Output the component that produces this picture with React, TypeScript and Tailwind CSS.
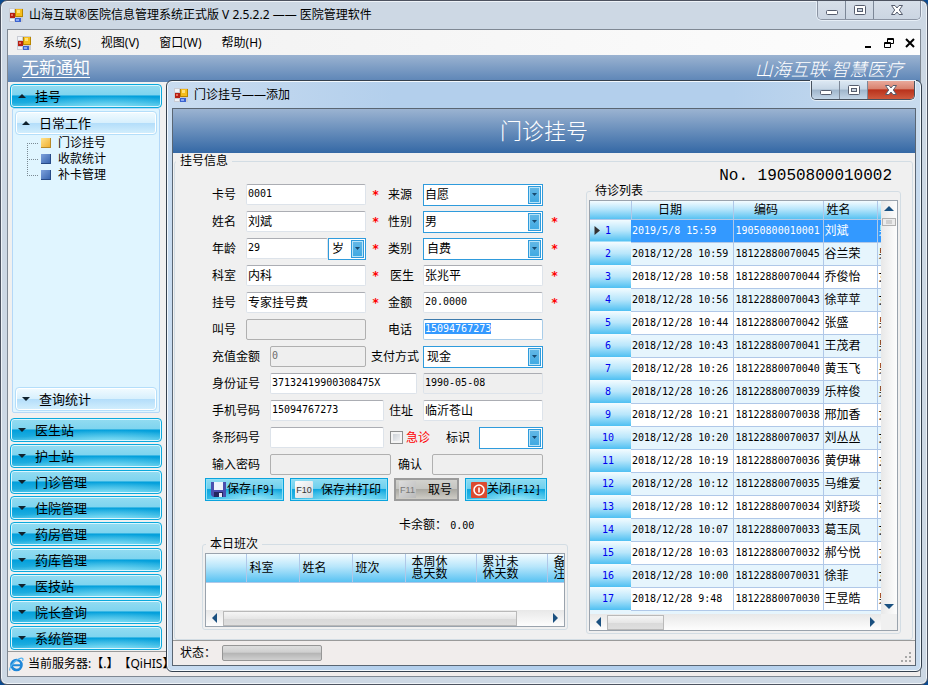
import { useEffect, useRef } from "react";
import type { ReactNode } from "react";

const CJK = "font-['Noto_Sans','Noto_Sans_CJK_SC',sans-serif]";
const MONO = "font-['DejaVu_Sans_Mono','Noto_Sans_CJK_SC',monospace] text-[10px]";

function AppIcon() {
  return (
    <svg width="14" height="14" viewBox="0 0 14 14" className="shrink-0">
      <rect width="14" height="14" fill="#c9ccd4" />
      <rect x="1" y="1" width="4" height="3" fill="#f1f3f7" />
      <rect x="1" y="5" width="5" height="5" fill="#b51f14" />
      <rect x="2" y="6" width="2" height="2" fill="#e8705c" />
      <rect x="6" y="1" width="8" height="8" fill="#b88600" />
      <rect x="7" y="1" width="6" height="7" fill="#f5bd1c" />
      <rect x="8" y="2" width="3" height="3" fill="#ffe27a" />
      <rect x="1" y="11" width="4" height="2" fill="#f1f3f7" />
      <rect x="6" y="10" width="6" height="4" fill="#3b63cf" />
      <rect x="7" y="11" width="3" height="2" fill="#8aa9f4" />
    </svg>
  );
}

function CaptionGlyph({ kind }: { kind: "min" | "max" | "close" }) {
  return (
    <svg width="14" height="12" viewBox="0 0 14 12" fill="#fff" stroke="#565d6e">
      {kind === "min" && <rect x="1.5" y="6.5" width="11" height="4" rx="1" />}
      {kind === "max" && (
        <>
          <rect x="1.5" y="1.5" width="11" height="9" rx="1" />
          <rect x="4.5" y="4.5" width="5" height="3" fill="#c9d3df" />
        </>
      )}
      {kind === "close" && (
        <path d="M1.5 1.5H5L7 4L9 1.5H12.5L9.3 6L12.5 10.5H9L7 8L5 10.5H1.5L4.7 6Z" />
      )}
    </svg>
  );
}

function CaptionButtons({ active = false }: { active?: boolean }) {
  const face = active
    ? "bg-[linear-gradient(#dce8f3_0%,#c5d5e5_45%,#9fb5cb_50%,#c4d6e8_100%)]"
    : "bg-[linear-gradient(#d7dfe9,#cbd5e2)]";
  const closeFace = active
    ? "bg-[linear-gradient(#e9a99b_0%,#d98370_42%,#b9321c_50%,#cf5a3e_100%)]"
    : face;
  return (
    <div
      className={`flex h-[19px] overflow-hidden rounded-b-[5px] border border-t-0 shadow-[0_0_0_1px_#e6eef6] ${
        active ? "border-[#47525f]" : "border-[#8b94a3]"
      }`}
    >
      <button aria-label="最小化" className={`flex w-7 items-center justify-center border-r border-[#7c8797] ${face}`}>
        <CaptionGlyph kind="min" />
      </button>
      <button aria-label="最大化" className={`flex w-7 items-center justify-center border-r border-[#7c8797] ${face}`}>
        <CaptionGlyph kind="max" />
      </button>
      <button aria-label="关闭" className={`flex w-[46px] items-center justify-center ${closeFace}`}>
        <CaptionGlyph kind="close" />
      </button>
    </div>
  );
}

function Chevron({ up = false }: { up?: boolean }) {
  return (
    <svg width="8" height="4" viewBox="0 0 8 4" className="shrink-0" fill="#10222e">
      <path d={up ? "M0 4L4 0L8 4Z" : "M0 0H8L4 4Z"} />
    </svg>
  );
}

function NavButton({ label, up }: { label: string; up?: boolean }) {
  return (
    <button className="flex h-6 w-full shrink-0 items-center gap-[9px] rounded-[4px] border border-[#0aa9dc] bg-[radial-gradient(ellipse_60%_50%_at_65%_100%,#7fdcf4_0%,transparent_100%),linear-gradient(#93dcf1_0%,#7ed4ef_45%,#029fdb_50%,#1cacdf_80%,#4cc4e8_100%)] pl-[7px] text-left text-[13px] leading-[22px] shadow-[inset_0_0_0_1px_#d8f6ff]">
      <Chevron up={up} />
      {label}
    </button>
  );
}

function SubNavButton({ label, up }: { label: string; up?: boolean }) {
  return (
    <button className="flex h-6 w-full shrink-0 items-center gap-[9px] rounded-[4px] border border-[#b4defa] bg-[linear-gradient(#f2fbff_0%,#d8f0fd_48%,#b4defa_52%,#d4effd_100%)] pl-[6px] text-left text-[13px] leading-[22px] shadow-[inset_0_0_0_1px_#fff]">
      <Chevron up={up} />
      {label}
    </button>
  );
}

function TreeItem({ label, active, last }: { label: string; active?: boolean; last?: boolean }) {
  return (
    <li className="flex h-4 items-center">
      <svg width="13" height="16" viewBox="0 0 13 16" className="shrink-0" stroke="#7b8a94" strokeDasharray="1 1">
        {!active && <path d="M.5 0V8" />}
        {!last && <path d="M.5 8V16" />}
        <path d="M0 8.5H12" />
      </svg>
      <span
        className={`ml-px size-[10px] shrink-0 border-r border-b ${
          active
            ? "border-[#b88a28] bg-[linear-gradient(135deg,#ffe28c,#f0b030)]"
            : "border-[#274a86] bg-[linear-gradient(135deg,#7ea2dc,#3a66b0)]"
        }`}
      />
      <a href="#" className="ml-[7px] text-[12px] leading-4">
        {label}
      </a>
    </li>
  );
}

function Label({ id, w, children }: { id: string; w: string; children: ReactNode }) {
  return (
    <label htmlFor={id} className={`shrink-0 text-[12px] leading-4 whitespace-nowrap ${w}`}>
      {children}
    </label>
  );
}

function Star() {
  return (
    <span className="w-[22px] shrink-0 pl-[6px] font-['DejaVu_Sans_Mono',monospace] text-[12px] leading-4 font-bold text-[#ff0000]">
      *
    </span>
  );
}

function Text({
  id,
  value = "",
  w,
  mono,
  state = "normal",
  label,
}: {
  id: string;
  value?: string;
  w: string;
  mono?: boolean;
  state?: "normal" | "disabled" | "readonly";
  label?: string;
}) {
  const look =
    state === "disabled"
      ? "border-[#b0b0b0] bg-[#efefef] text-[#6d6d6d]"
      : state === "readonly"
        ? "border-[#dde3ea] border-t-[#abadb3] bg-[#efefef]"
        : "border-[#dde3ea] border-t-[#abadb3] bg-white";
  return (
    <input
      id={id}
      aria-label={label}
      defaultValue={value}
      disabled={state === "disabled"}
      readOnly={state === "readonly"}
      className={`h-[21px] min-w-0 shrink-0 rounded-[2px] border px-px pb-[2px] ${look} ${w} ${
        mono ? MONO : "text-[12px]"
      }`}
    />
  );
}

function Select({
  id,
  value = "",
  w,
  pad = "pl-px",
  label,
}: {
  id: string;
  value?: string;
  w: string;
  pad?: string;
  label?: string;
}) {
  return (
    <span className={`relative flex h-[22px] shrink-0 ${w}`}>
      <select
        id={id}
        aria-label={label}
        className={`h-full w-full appearance-none border border-[#2f9bdc] bg-white text-[12px] leading-5 text-black ${pad}`}
      >
        <option>{value}</option>
      </select>
      <span className="pointer-events-none absolute top-[2px] right-[2px] bottom-[2px] flex w-[13px] items-center justify-center border border-[#2f9bdc] bg-[linear-gradient(#64b8e6,#3fa9e2)] shadow-[inset_0_0_0_1px_#b9e4f8]">
        <svg width="5" height="3" viewBox="0 0 5 3" fill="#174a70">
          <path d="M0 0H5L2.5 3Z" />
        </svg>
      </span>
    </span>
  );
}

function Arrow({ dir }: { dir: "left" | "right" | "up" | "down" }) {
  const d = {
    left: "M8 0V10L3 5Z",
    right: "M2 0V10L7 5Z",
    up: "M0 7H10L5 2Z",
    down: "M0 3H10L5 8Z",
  }[dir];
  return (
    <svg width="10" height="10" viewBox="0 0 10 10" fill="#1a5080" className="shrink-0">
      <path d={d} />
    </svg>
  );
}

function HScroll({ thumb }: { thumb: string }) {
  return (
    <div className="flex h-4 shrink-0 items-center bg-[linear-gradient(#e8e8e8,#fdfdfd)] px-[3px]">
      <button aria-label="向左滚动" className="mr-1 flex">
        <Arrow dir="left" />
      </button>
      <div className="flex h-[15px] flex-1">
        <div className={`border border-[#b9b9b9] bg-[linear-gradient(#f6f6f6_0%,#e6e6e6_50%,#d9d9d9_52%,#dedede_100%)] ${thumb}`} />
      </div>
      <button aria-label="向右滚动" className="flex">
        <Arrow dir="right" />
      </button>
    </div>
  );
}

const HEAD = "bg-[linear-gradient(#f4fcff_0%,#b8e6fb_45%,#58c2f2_100%)]";

const NAV = ["医生站", "护士站", "门诊管理", "住院管理", "药房管理", "药库管理", "医技站", "院长查询", "系统管理"];

const QUEUE: [string, string, string, string][] = [
  ["2019/5/8 15:59", "19050800010001", "刘斌", "男"],
  ["2018/12/28 10:59", "18122880070045", "谷兰荣", "男"],
  ["2018/12/28 10:58", "18122880070044", "乔俊怡", "女"],
  ["2018/12/28 10:56", "18122880070043", "徐苹苹", "女"],
  ["2018/12/28 10:44", "18122880070042", "张盛", "男"],
  ["2018/12/28 10:43", "18122880070041", "王茂君", "男"],
  ["2018/12/28 10:26", "18122880070040", "黄玉飞", "男"],
  ["2018/12/28 10:26", "18122880070039", "乐梓俊", "男"],
  ["2018/12/28 10:21", "18122880070038", "邢加香", "女"],
  ["2018/12/28 10:20", "18122880070037", "刘丛丛", "女"],
  ["2018/12/28 10:19", "18122880070036", "黄伊琳", "女"],
  ["2018/12/28 10:12", "18122880070035", "马维爱", "女"],
  ["2018/12/28 10:12", "18122880070034", "刘舒琰", "女"],
  ["2018/12/28 10:07", "18122880070033", "葛玉凤", "女"],
  ["2018/12/28 10:03", "18122880070032", "郝兮悦", "女"],
  ["2018/12/28 10:00", "18122880070031", "徐菲", "女"],
  ["2018/12/28 9:48", "18122880070030", "王昱皓", "男"],
];

function QueueTable() {
  return (
    <div className="flex min-h-0 flex-1 border border-[#9aa3ad] bg-[#f0f0f0]">
      <div className="flex min-w-0 flex-1 flex-col">
        <div className="min-h-0 flex-1 overflow-hidden bg-[#e6f5fd]">
          <table className="w-full table-fixed border-collapse text-[12px] leading-4">
            <colgroup>
              <col className="w-[41px]" />
              <col className="w-[102px]" />
              <col className="w-[90px]" />
              <col className="w-[54px]" />
              <col />
            </colgroup>
            <thead>
              <tr className={`h-[18px] ${HEAD}`}>
                <th className="border-r border-b border-[#b0c8e8] p-0" />
                <th className="border-r border-b border-[#b0c8e8] p-0 pr-6 font-normal">日期</th>
                <th className="border-r border-b border-[#b0c8e8] p-0 pr-6 font-normal">编码</th>
                <th className="border-r border-b border-[#b0c8e8] p-0 pl-[3px] text-left font-normal">姓名</th>
                <th className="border-b border-[#b0c8e8] p-0" />
              </tr>
            </thead>
            <tbody>
              {QUEUE.map(([date, code, name, sex], i) => (
                <tr
                  key={code}
                  className={`h-[23px] ${
                    i === 0 ? "bg-[#3399ff] text-white" : i % 2 ? "bg-[#e6f5fd]" : "bg-white"
                  }`}
                >
                  <th className="bg-[linear-gradient(#f4fcff_0%,#b8e6fb_50%,#4fc0f2_100%)] p-0 font-normal text-[#0000ee]">
                    <span className="flex items-center">
                      <span className="flex w-3 pl-1">
                        {i === 0 && (
                          <svg width="7" height="9" viewBox="0 0 7 9" className="shrink-0" fill="#333">
                            <path d="M.5 0V9L6 4.5Z" />
                          </svg>
                        )}
                      </span>
                      <span className={`w-3 text-center ${MONO}`}>{i + 1}</span>
                    </span>
                  </th>
                  <td className={`border-r border-b border-[#b0c8e8] p-0 pl-px whitespace-nowrap ${MONO}`}>{date}</td>
                  <td className={`border-r border-b border-[#b0c8e8] p-0 pl-[2px] whitespace-nowrap ${MONO}`}>{code}</td>
                  <td className="border-r border-b border-[#b0c8e8] p-0 pl-px whitespace-nowrap">{name}</td>
                  <td className="overflow-hidden border-b border-[#b0c8e8] p-0 pl-px whitespace-nowrap">{sex}</td>
                </tr>
              ))}
            </tbody>
          </table>
        </div>
        <HScroll thumb="w-[57px]" />
      </div>
      <div className="mb-4 flex w-4 shrink-0 flex-col items-center bg-[linear-gradient(90deg,#e8e8e8,#fdfdfd)] py-[3px]">
        <button aria-label="向上滚动" className="flex">
          <Arrow dir="up" />
        </button>
        <div className="mt-1 flex h-2 w-[14px] items-center justify-center border border-[#b0b0b0] bg-[#ececec]">
          <span className="h-1 w-[6px] bg-[#cfcfcf]" />
        </div>
        <div className="flex-1" />
        <button aria-label="向下滚动" className="flex">
          <Arrow dir="down" />
        </button>
      </div>
    </div>
  );
}

function ShiftTable() {
  const th = "border-r border-b border-[#b0c8e8] p-0 text-left font-normal whitespace-nowrap";
  return (
    <div className="flex h-[74px] flex-col overflow-hidden border border-[#9aa3ad] bg-white">
      <div className="flex-1 overflow-hidden">
        <table className="w-full table-fixed border-collapse text-[12px] leading-3">
          <colgroup>
            <col className="w-[40px]" />
            <col className="w-[53px]" />
            <col className="w-[53px]" />
            <col className="w-[53px]" />
            <col className="w-[71px]" />
            <col className="w-[71px]" />
            <col />
          </colgroup>
          <thead>
            <tr className={`h-7 ${HEAD}`}>
              <th className={th} />
              <th className={`${th} pl-[3px]`}>科室</th>
              <th className={`${th} pl-[3px]`}>姓名</th>
              <th className={`${th} pl-[3px]`}>班次</th>
              <th className={`${th} pl-[6px]`}>
                本周休
                <br />
                息天数
              </th>
              <th className={`${th} pl-[6px]`}>
                累计未
                <br />
                休天数
              </th>
              <th className="overflow-hidden border-b border-[#b0c8e8] p-0 pl-[6px] text-left font-normal whitespace-nowrap">
                备
                <br />
                注
              </th>
            </tr>
          </thead>
        </table>
      </div>
      <HScroll thumb="w-[294px]" />
    </div>
  );
}

const BTN =
  "flex h-[23px] shrink-0 items-center border border-[#0aa3dd] text-[12px] leading-5 whitespace-nowrap shadow-[inset_0_0_0_1px_#8fe0f6] bg-[radial-gradient(ellipse_60%_60%_at_60%_100%,#a0ecfa_0%,transparent_100%),linear-gradient(#8edcf2_0%,#6fd0ee_45%,#0fa6de_50%,#2fb8e6_100%)]";

function RegistrationForm() {
  const phone = useRef<HTMLInputElement>(null);
  useEffect(() => {
    phone.current?.focus();
    phone.current?.select();
  }, []);
  const row = "flex h-[27px] items-center";
  return (
    <form className="pt-3" onSubmit={(e) => e.preventDefault()}>
      <div className="pl-[37px]">
        <div className={row}>
          <Label id="card" w="w-[34px]">卡号</Label>
          <Text id="card" value="0001" w="w-[120px]" mono />
          <Star />
          <Label id="source" w="w-[35px]">来源</Label>
          <Select id="source" value="自愿" w="w-[120px]" />
        </div>
        <div className={row}>
          <Label id="name" w="w-[34px]">姓名</Label>
          <Text id="name" value="刘斌" w="w-[120px]" />
          <Star />
          <Label id="gender" w="w-[35px]">性别</Label>
          <Select id="gender" value="男" w="w-[120px]" />
          <span className="w-[2px]" />
          <Star />
        </div>
        <div className={row}>
          <Label id="age" w="w-[34px]">年龄</Label>
          <Text id="age" value="29" w="w-[82px]" mono />
          <Select id="ageunit" label="年龄单位" value="岁" w="w-[38px]" pad="pl-[3px]" />
          <Star />
          <Label id="kind" w="w-[35px]">类别</Label>
          <Select id="kind" value="自费" w="w-[120px]" pad="pl-[3px]" />
          <span className="w-[2px]" />
          <Star />
        </div>
        <div className={row}>
          <Label id="dept" w="w-[34px]">科室</Label>
          <Text id="dept" value="内科" w="w-[120px]" />
          <Star />
          <Label id="doctor" w="w-[35px] pl-[2px]">医生</Label>
          <Text id="doctor" value="张兆平" w="w-[120px]" />
          <span className="w-[2px]" />
          <Star />
        </div>
        <div className={row}>
          <Label id="reg" w="w-[34px]">挂号</Label>
          <Text id="reg" value="专家挂号费" w="w-[120px]" />
          <Star />
          <Label id="amount" w="w-[35px]">金额</Label>
          <Text id="amount" value="20.0000" w="w-[120px]" mono />
          <span className="w-[2px]" />
          <Star />
        </div>
        <div className={row}>
          <Label id="call" w="w-[34px]">叫号</Label>
          <Text id="call" w="w-[120px]" state="disabled" />
          <span className="w-[22px]" />
          <Label id="tel" w="w-[35px]">电话</Label>
          <input
            id="tel"
            ref={phone}
            defaultValue="15094767273"
            className={`h-[21px] w-[120px] rounded-[2px] border border-[#a9cde9] border-t-[#3d7bad] bg-white px-px pb-[2px] outline-none selection:bg-[#3399ff] selection:text-white ${MONO}`}
          />
        </div>
        <div className={row}>
          <Label id="recharge" w="w-[58px]">充值金额</Label>
          <Text id="recharge" value="0" w="w-[96px]" mono state="disabled" />
          <span className="w-[5px]" />
          <Label id="pay" w="w-[52px]">支付方式</Label>
          <Select id="pay" value="现金" w="w-[120px]" pad="pl-[3px]" />
        </div>
        <div className={row}>
          <Label id="idno" w="w-[58px]">身份证号</Label>
          <Text id="idno" value="37132419900308475X" w="w-[147px]" mono />
          <span className="w-[6px]" />
          <Text id="birth" label="出生日期" value="1990-05-08" w="w-[120px]" mono state="readonly" />
        </div>
        <div className={row}>
          <Label id="mobile" w="w-[58px]">手机号码</Label>
          <Text id="mobile" value="15094767273" w="w-[114px]" mono />
          <span className="w-[5px]" />
          <Label id="addr" w="w-[34px]">住址</Label>
          <Text id="addr" value="临沂苍山" w="w-[120px]" />
        </div>
        <div className={row}>
          <Label id="barcode" w="w-[58px]">条形码号</Label>
          <Text id="barcode" w="w-[114px]" />
          <input
            id="urgent"
            type="checkbox"
            className="ml-[6px] size-[13px] shrink-0 appearance-none border border-[#8e8f8f] bg-[linear-gradient(135deg,#c4c9d0,#fafafa)] shadow-[inset_0_0_0_2px_#f4f4f4]"
          />
          <label htmlFor="urgent" className="ml-[3px] w-10 shrink-0 text-[12px] leading-4 text-[#ff0000]">
            急诊
          </label>
          <Label id="flag" w="w-[33px]">标识</Label>
          <Select id="flag" w="w-[64px]" />
        </div>
        <div className={row}>
          <Label id="pwd" w="w-[58px]">输入密码</Label>
          <Text id="pwd" w="w-[121px]" state="disabled" />
          <span className="w-[7px]" />
          <Label id="confirm" w="w-[34px]">确认</Label>
          <Text id="confirm" w="w-[111px]" state="disabled" />
        </div>
      </div>

      <div className="flex gap-[6px] pl-[30px]">
        <button type="submit" className={`${BTN} w-[79px] pl-1`}>
          <svg width="17" height="17" viewBox="0 0 17 17" className="shrink-0">
            <path d="M1 1H16V16H3L1 14Z" fill="#4a4fae" />
            <rect x="4" y="1" width="9" height="8" fill="#eef2fb" />
            <rect x="4" y="11" width="9" height="5" fill="#23275e" />
            <rect x="9" y="12" width="3" height="4" fill="#e6e9f6" />
          </svg>
          <span>保存<span className={MONO}>[F9]</span></span>
        </button>
        <button type="button" className={`${BTN} w-[98px] pl-1`}>
          <span className="mr-[8px] flex h-[17px] w-[18px] items-center justify-center rounded-[1px] bg-[linear-gradient(135deg,#fff,#d4dade)] font-['Liberation_Sans',sans-serif] text-[9px] leading-4 text-[#333]">
            F10
          </span>
          保存并打印
        </button>
        <button
          type="button"
          className="flex h-[23px] w-[65px] shrink-0 items-center border-2 border-[#9b9b9b] bg-[linear-gradient(#d2d2ce_0%,#c6c6c2_45%,#aaa9a3_50%,#cfcdc6_100%)] pl-[3px] text-[12px] leading-5 whitespace-nowrap"
        >
          <span className="mr-[12px] flex h-[17px] w-[17px] items-center justify-center bg-[linear-gradient(135deg,#ddd,#bbb)] font-['Liberation_Sans',sans-serif] text-[9px] leading-4 text-[#777]">
            F11
          </span>
          取号
        </button>
        <button type="button" className={`${BTN} w-[82px] pl-[5px]`}>
          <svg width="16" height="16" viewBox="0 0 16 16" className="shrink-0">
            <rect width="16" height="16" rx="1" fill="#dc4a30" />
            <circle cx="8" cy="8" r="5" fill="none" stroke="#fff" strokeWidth="1.6" />
            <path d="M8 5.5V10.5" stroke="#fff" strokeWidth="1.6" />
          </svg>
          <span>关闭<span className={MONO}>[F12]</span></span>
        </button>
      </div>

      <p className="mt-[14px] pl-[224px] text-[12px] leading-5">
        卡余额： <output className={MONO}>0.00</output>
      </p>
    </form>
  );
}

export default function App() {
  return (
    <div className={`h-screen w-full bg-[#0a4a90] text-black [text-spacing-trim:space-all] ${CJK}`}>
      <div className="relative flex h-full flex-col overflow-hidden rounded-[7px] border border-[#4d5360] bg-[#cdd8e4] px-[6px] pb-[7px] shadow-[inset_0_0_0_1px_#eef3f8]">
        <header className="flex h-7 shrink-0 items-start justify-between">
          <div className="flex items-center gap-[6px] pl-[2px] text-[12px] leading-[27px] whitespace-nowrap">
            <AppIcon />
            山海互联®医院信息管理系统正式版 V 2.5.2.2 —— 医院管理软件
          </div>
          <CaptionButtons />
        </header>

        <div className="flex min-h-0 flex-1 flex-col border border-[#7f8893] bg-[#f0f0f0]">
          <nav className="flex h-[25px] shrink-0 items-center bg-[linear-gradient(90deg,#f0f0f0,#fdfdfd)] pr-[5px] pl-[9px] text-[12px] leading-5">
            <AppIcon />
            <div className="flex flex-1 gap-5 pl-3">
              <button>系统(S)</button>
              <button>视图(V)</button>
              <button>窗口(W)</button>
              <button>帮助(H)</button>
            </div>
            <div className="flex gap-[11px]">
              <button aria-label="最小化子窗口">
                <svg width="9" height="10" viewBox="0 0 9 10"><path d="M1 8H7V10H1Z" /></svg>
              </button>
              <button aria-label="还原子窗口">
                <svg width="10" height="10" viewBox="0 0 10 10" fill="none" stroke="#000">
                  <path d="M3.5 4V.5H9.5V5.5H7M3 1.5H10" />
                  <path d="M.5 4.5H6.5V9.5H.5ZM0 5.5H7" />
                </svg>
              </button>
              <button aria-label="关闭子窗口">
                <svg width="10" height="10" viewBox="0 0 10 10" stroke="#000" strokeWidth="2">
                  <path d="M1 1L9 9M9 1L1 9" />
                </svg>
              </button>
            </div>
          </nav>

          <div className="flex h-[27px] shrink-0 items-center justify-between bg-[linear-gradient(#9bb3d1,#5b84b6)] pr-[17px] pl-[14px] text-white">
            <a href="#" className="border-b border-white text-[17px] leading-[18px]">无新通知</a>
            <span className="text-[18px] leading-6 font-light italic">山海互联·智慧医疗</span>
          </div>

          <aside className="flex min-h-0 w-[156px] flex-1 flex-col gap-[5px] p-[2px] pb-px">
            <div className="flex min-h-0 flex-1 flex-col">
              <NavButton label="挂号" up />
              <div className="mx-[2px] flex min-h-0 flex-1 flex-col rounded-[2px] border border-[#b4d8f8] bg-[#e0f5ff] p-[2px] pb-px">
                <SubNavButton label="日常工作" up />
                <ul className="min-h-0 flex-1 overflow-hidden pl-3">
                  <TreeItem label="门诊挂号" active />
                  <TreeItem label="收款统计" />
                  <TreeItem label="补卡管理" last />
                </ul>
                <SubNavButton label="查询统计" />
              </div>
            </div>
            <div className="flex shrink-0 flex-col gap-[2px]">
              {NAV.map((n) => (
                <NavButton key={n} label={n} />
              ))}
            </div>
          </aside>

          <footer className="flex h-[25px] shrink-0 items-center gap-1 border-t border-[#9a9a9a] bg-[#f1edec] pl-px text-[12px] whitespace-nowrap">
            <svg width="15" height="15" viewBox="0 0 15 15" fill="none">
              <circle cx="7.5" cy="8" r="5" stroke="#1f86d8" strokeWidth="2.6" />
              <path d="M3 8.2H12" stroke="#1f86d8" strokeWidth="2" />
              <path d="M1 13.5C-.5 11 5 4 10 1.8C14 0 14.5 2 13.5 4" stroke="#55b3f0" strokeWidth="1.2" />
            </svg>
            当前服务器:【.】【QiHIS】
          </footer>
        </div>

        {/* MDI child window, floating over the workspace */}
        <section className="absolute top-[79px] right-[5px] bottom-[12px] left-[165px] flex flex-col rounded-[6px] border border-[#34404e] bg-[linear-gradient(90deg,#c9dcf0_0%,#b3cfec_30%,#b3cfec_75%,#c8dbee_100%)] px-[5px] pb-[5px] shadow-[inset_0_0_0_1px_#f2f8fd]">
          <header className="flex h-[27px] shrink-0 items-start justify-between pr-px pl-[2px]">
            <h2 className="flex items-center gap-[6px] text-[12px] leading-[27px]">
              <AppIcon />
              门诊挂号——添加
            </h2>
            <CaptionButtons active />
          </header>
          <div className="flex min-h-0 flex-1 flex-col border border-[#5a6673] bg-[#f0f0f0]">
            <h1 className="h-11 shrink-0 bg-[linear-gradient(#9bb3d1,#3468a5)] text-center text-[22px] leading-[42px] font-light text-white">
              门诊挂号
            </h1>
            <fieldset className="mr-[2px] ml-px flex min-h-0 min-w-0 flex-1 rounded-[3px] border border-[#d3dde4]">
              <legend className="ml-px px-1 text-[12px] leading-4">挂号信息</legend>
              <div className="w-[411px] shrink-0">
                <RegistrationForm />
                <fieldset className="mr-[18px] ml-[27px] rounded-[3px] border border-[#d3dde4] px-[2px] pt-px pb-[2px]">
                  <legend className="ml-px px-1 text-[12px] leading-4">本日班次</legend>
                  <ShiftTable />
                </fieldset>
              </div>
              <div className="flex min-w-0 flex-1 flex-col pr-[11px] pb-[5px]">
                <p className="pr-[9px] text-right font-['Liberation_Mono','Noto_Sans_CJK_SC',monospace] text-[16px] leading-[14px]">
                  No. 19050800010002
                </p>
                <fieldset className="flex min-h-0 min-w-0 flex-1 flex-col rounded-[3px] border border-[#d3dde4] px-[2px] pt-px pb-[2px]">
                  <legend className="ml-[2px] px-1 text-[12px] leading-4">待诊列表</legend>
                  <QueueTable />
                </fieldset>
              </div>
            </fieldset>
            <footer className="flex h-[25px] shrink-0 items-center justify-between border-t border-[#9a9a9a] bg-[#f1edec] pr-[3px] pl-[7px]">
              <span className="flex items-center gap-[6px] text-[12px] leading-5">
                状态：
                <span
                  role="progressbar"
                  aria-label="状态"
                  className="h-4 w-[100px] rounded-[2px] border border-[#969696] bg-[linear-gradient(#dedede_0%,#cfcfcf_45%,#b4b4b4_50%,#d0d0d0_100%)]"
                />
              </span>
              <svg width="12" height="12" viewBox="0 0 12 12" className="mt-2" fill="#a8a8a8">
                <path d="M9 1h2v2H9zM9 5h2v2H9zM5 5h2v2H5zM9 9h2v2H9zM5 9h2v2H5zM1 9h2v2H1z" />
              </svg>
            </footer>
          </div>
        </section>
      </div>
    </div>
  );
}
